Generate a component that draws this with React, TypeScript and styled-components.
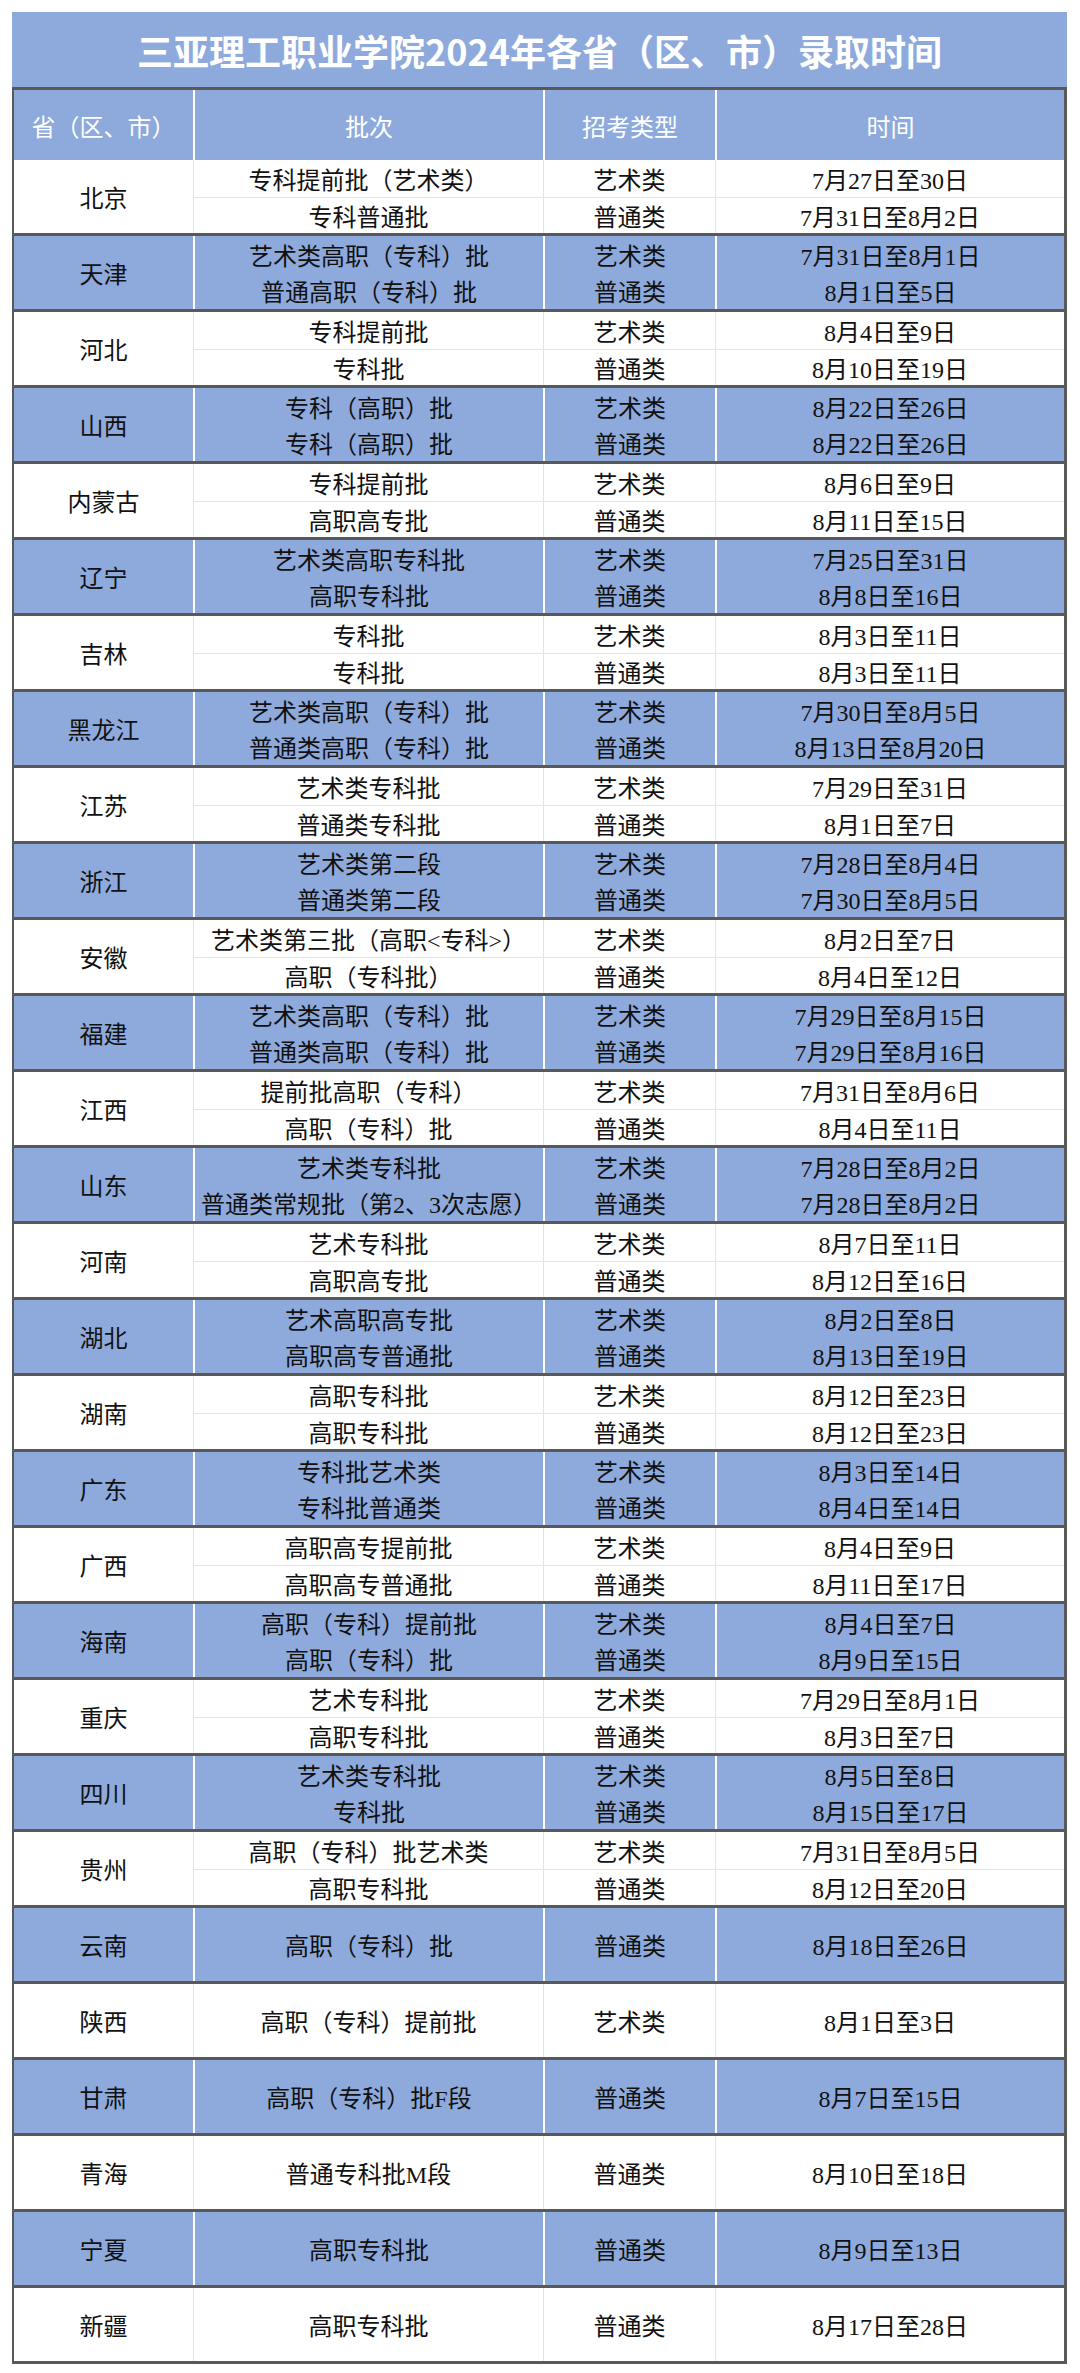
import React from 'react'
import styled, { createGlobalStyle } from 'styled-components'

const BLUE = '#8eaadc'
const DARK = '#595959'
const LINE = '#e4e4e4'
const COLS = '179px 350px 172px 1fr'

type Entry = { batch: string, kind: string, time: string }
type Group = { province: string, items: Entry[] }

const A = '艺术类'
const P = '普通类'

const data: Group[] = [
  { province: '北京', items: [{ batch: '专科提前批（艺术类）', kind: A, time: '7月27日至30日' }, { batch: '专科普通批', kind: P, time: '7月31日至8月2日' }] },
  { province: '天津', items: [{ batch: '艺术类高职（专科）批', kind: A, time: '7月31日至8月1日' }, { batch: '普通高职（专科）批', kind: P, time: '8月1日至5日' }] },
  { province: '河北', items: [{ batch: '专科提前批', kind: A, time: '8月4日至9日' }, { batch: '专科批', kind: P, time: '8月10日至19日' }] },
  { province: '山西', items: [{ batch: '专科（高职）批', kind: A, time: '8月22日至26日' }, { batch: '专科（高职）批', kind: P, time: '8月22日至26日' }] },
  { province: '内蒙古', items: [{ batch: '专科提前批', kind: A, time: '8月6日至9日' }, { batch: '高职高专批', kind: P, time: '8月11日至15日' }] },
  { province: '辽宁', items: [{ batch: '艺术类高职专科批', kind: A, time: '7月25日至31日' }, { batch: '高职专科批', kind: P, time: '8月8日至16日' }] },
  { province: '吉林', items: [{ batch: '专科批', kind: A, time: '8月3日至11日' }, { batch: '专科批', kind: P, time: '8月3日至11日' }] },
  { province: '黑龙江', items: [{ batch: '艺术类高职（专科）批', kind: A, time: '7月30日至8月5日' }, { batch: '普通类高职（专科）批', kind: P, time: '8月13日至8月20日' }] },
  { province: '江苏', items: [{ batch: '艺术类专科批', kind: A, time: '7月29日至31日' }, { batch: '普通类专科批', kind: P, time: '8月1日至7日' }] },
  { province: '浙江', items: [{ batch: '艺术类第二段', kind: A, time: '7月28日至8月4日' }, { batch: '普通类第二段', kind: P, time: '7月30日至8月5日' }] },
  { province: '安徽', items: [{ batch: '艺术类第三批（高职<专科>）', kind: A, time: '8月2日至7日' }, { batch: '高职（专科批）', kind: P, time: '8月4日至12日' }] },
  { province: '福建', items: [{ batch: '艺术类高职（专科）批', kind: A, time: '7月29日至8月15日' }, { batch: '普通类高职（专科）批', kind: P, time: '7月29日至8月16日' }] },
  { province: '江西', items: [{ batch: '提前批高职（专科）', kind: A, time: '7月31日至8月6日' }, { batch: '高职（专科）批', kind: P, time: '8月4日至11日' }] },
  { province: '山东', items: [{ batch: '艺术类专科批', kind: A, time: '7月28日至8月2日' }, { batch: '普通类常规批（第2、3次志愿）', kind: P, time: '7月28日至8月2日' }] },
  { province: '河南', items: [{ batch: '艺术专科批', kind: A, time: '8月7日至11日' }, { batch: '高职高专批', kind: P, time: '8月12日至16日' }] },
  { province: '湖北', items: [{ batch: '艺术高职高专批', kind: A, time: '8月2日至8日' }, { batch: '高职高专普通批', kind: P, time: '8月13日至19日' }] },
  { province: '湖南', items: [{ batch: '高职专科批', kind: A, time: '8月12日至23日' }, { batch: '高职专科批', kind: P, time: '8月12日至23日' }] },
  { province: '广东', items: [{ batch: '专科批艺术类', kind: A, time: '8月3日至14日' }, { batch: '专科批普通类', kind: P, time: '8月4日至14日' }] },
  { province: '广西', items: [{ batch: '高职高专提前批', kind: A, time: '8月4日至9日' }, { batch: '高职高专普通批', kind: P, time: '8月11日至17日' }] },
  { province: '海南', items: [{ batch: '高职（专科）提前批', kind: A, time: '8月4日至7日' }, { batch: '高职（专科）批', kind: P, time: '8月9日至15日' }] },
  { province: '重庆', items: [{ batch: '艺术专科批', kind: A, time: '7月29日至8月1日' }, { batch: '高职专科批', kind: P, time: '8月3日至7日' }] },
  { province: '四川', items: [{ batch: '艺术类专科批', kind: A, time: '8月5日至8日' }, { batch: '专科批', kind: P, time: '8月15日至17日' }] },
  { province: '贵州', items: [{ batch: '高职（专科）批艺术类', kind: A, time: '7月31日至8月5日' }, { batch: '高职专科批', kind: P, time: '8月12日至20日' }] },
  { province: '云南', items: [{ batch: '高职（专科）批', kind: P, time: '8月18日至26日' }] },
  { province: '陕西', items: [{ batch: '高职（专科）提前批', kind: A, time: '8月1日至3日' }] },
  { province: '甘肃', items: [{ batch: '高职（专科）批F段', kind: P, time: '8月7日至15日' }] },
  { province: '青海', items: [{ batch: '普通专科批M段', kind: P, time: '8月10日至18日' }] },
  { province: '宁夏', items: [{ batch: '高职专科批', kind: P, time: '8月9日至13日' }] },
  { province: '新疆', items: [{ batch: '高职专科批', kind: P, time: '8月17日至28日' }] }
]

const App = (): JSX.Element => {
  return (
    <Page>
      <GlobalStyle />
      <Title>三亚理工职业学院2024年各省（区、市）录取时间</Title>
      <Table>
        <HeaderRow>
          <HeadCell>省（区、市）</HeadCell>
          <HeadCell divided>批次</HeadCell>
          <HeadCell divided>招考类型</HeadCell>
          <HeadCell divided>时间</HeadCell>
        </HeaderRow>
        {data.map((group, i) => {
          const blue = i % 2 === 1
          return (
            <GroupRow key={group.province} blue={blue}>
              <Province style={{ gridRow: `1 / span ${group.items.length}` }}>{group.province}</Province>
              {group.items.map((item, j) => (
                <React.Fragment key={j}>
                  <Cell blue={blue} split={j > 0}>{item.batch}</Cell>
                  <Cell blue={blue} split={j > 0}>{item.kind}</Cell>
                  <Cell blue={blue} split={j > 0}>{item.time}</Cell>
                </React.Fragment>
              ))}
            </GroupRow>
          )
        })}
      </Table>
    </Page>
  )
}

export default App

const GlobalStyle = createGlobalStyle`
  html, body {
    margin: 0;
    padding: 0;
    background: #fff;
  }
  * { box-sizing: border-box; }
`

const Page = styled.div`
  width: 1080px;
  padding: 12px 13px 11px 12px;
  font-family: "Liberation Serif", "Noto Sans CJK SC", serif;
  color: #111;
`

const Title = styled.h1`
  margin: 0;
  height: 75px;
  background: ${BLUE};
  color: #fff;
  font-family: "Noto Sans CJK SC", sans-serif;
  font-weight: 700;
  font-size: 36px;
  display: flex;
  align-items: center;
  justify-content: center;
`

const Table = styled.div`
  border-left: 2px solid ${DARK};
  border-right: 3px solid ${DARK};
`

const HeaderRow = styled.div`
  display: grid;
  grid-template-columns: ${COLS};
  height: 73px;
  border-top: 3px solid ${DARK};
  background: ${BLUE};
`

const HeadCell = styled.div<{ divided?: boolean }>`
  display: flex;
  align-items: center;
  justify-content: center;
  color: #fff;
  font-size: 24px;
  border-left: ${({ divided }) => divided ? '2px solid #fff' : 'none'};
`

const GroupRow = styled.div<{ blue: boolean }>`
  display: grid;
  grid-template-columns: ${COLS};
  grid-auto-rows: 1fr;
  height: 76px;
  border-bottom: 3px solid ${DARK};
  background: ${({ blue }) => blue ? BLUE : '#fff'};
`

const Province = styled.div`
  grid-column: 1;
  display: flex;
  align-items: center;
  justify-content: center;
  font-size: 24px;
`

const Cell = styled.div<{ blue: boolean, split: boolean }>`
  display: flex;
  align-items: center;
  justify-content: center;
  font-size: 24px;
  white-space: nowrap;
  border-left: ${({ blue }) => blue ? '2px solid #fff' : `1px solid ${LINE}`};
  border-top: ${({ split, blue }) => split && !blue ? `1px solid ${LINE}` : 'none'};
`
